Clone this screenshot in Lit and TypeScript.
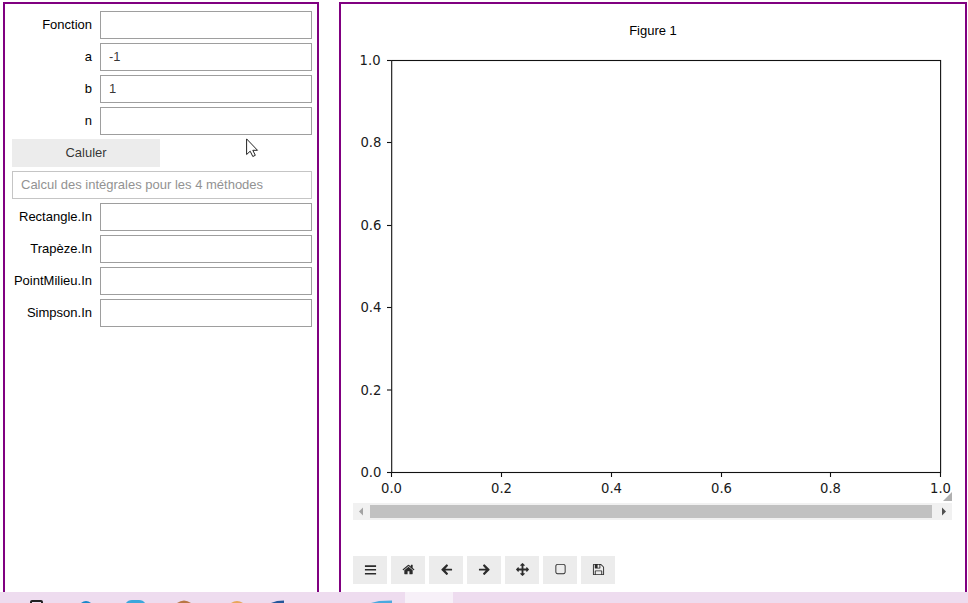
import { LitElement, html, css, svg } from "lit";
import { customElement, property } from "lit/decorators.js";

const ICONS: Record<string, string> = {
  bars: "M128 320h1536v225h-1536zM128 825h1536v225h-1536zM128 1375h1536v225h-1536z",
  home: "M1472 992v480q0 26-19 45t-45 19h-384v-384h-256v384h-384q-26 0-45-19t-19-45v-480q0-1 .5-3t.5-3l575-474 575 474q1 2 1 6zm223-69l-62 74q-8 9-21 11h-3q-13 0-21-7l-692-577-692 577q-12 8-24 7-13-2-21-11l-62-74q-8-10-7-23.5t11-21.5l719-599q32-26 76-26t76 26l244 204v-195q0-14 9-23t23-9h192q14 0 23 9t9 23v408l219 182q10 8 11 21.5t-7 23.5z",
  left: "M1664 860v130q0 60-60 60h-870l350 365q50 55 0 110l-100 100q-60 50-120 0l-660-665q-40-45 0-95l660-665q60-50 120 0l100 100q50 55 0 110l-350 370h870q60 0 60 80z",
  arrows: "M1792 896q0 26-19 45l-256 256q-19 19-45 19t-45-19-19-45v-128h-384v384h128q26 0 45 19t19 45-19 45l-256 256q-19 19-45 19t-45-19l-256-256q-19-19-19-45t19-45 45-19h128v-384h-384v128q0 26-19 45t-45 19-45-19l-256-256q-19-19-19-45t19-45l256-256q19-19 45-19t45 19 19 45v128h384v-384h-128q-26 0-45-19t-19-45 19-45l256-256q19-19 45-19t45 19l256 256q19 19 19 45t-19 45-45 19h-128v384h384v-128q0-26 19-45t45-19 45 19l256 256q19 19 19 45z",
  square: "M1312 256h-832q-66 0-113 47t-47 113v832q0 66 47 113t113 47h832q66 0 113-47t47-113v-832q0-66-47-113t-113-47zm288 160v832q0 119-84.5 203.5t-203.5 84.5h-832q-119 0-203.5-84.5t-84.5-203.5v-832q0-119 84.5-203.5t203.5-84.5h832q119 0 203.5 84.5t84.5 203.5z",
  save: "M512 1536h768v-384h-768v384zm896 0h128v-896q0-14-10-38.5t-20-34.5l-281-281q-10-10-34-20t-39-10v416q0 40-28 68t-68 28h-576q-40 0-68-28t-28-68v-416h-128v1280h128v-416q0-40 28-68t68-28h832q40 0 68 28t28 68v416zm-384-928v-320q0-13-9.5-22.5t-22.5-9.5h-192q-13 0-22.5 9.5t-9.5 22.5v320q0 13 9.5 22.5t22.5 9.5h192q13 0 22.5-9.5t9.5-22.5zm640 32v928q0 40-28 68t-68 28h-1344q-40 0-68-28t-28-68v-1344q0-40 28-68t68-28h928q40 0 88 20t76 48l280 280q28 28 48 76t20 88z",
};

@customElement("text-field")
class TextField extends LitElement {
  @property() label = "";
  @property() value = "";
  static styles = css`
    :host { display: flex; height: 28px; }
    .label { width: 80px; margin-right: 8px; text-align: right; line-height: 28px; white-space: nowrap; color: #000; }
    .box { flex: 1; box-sizing: border-box; border: 1px solid #9e9e9e; padding: 0 8px; line-height: 26px; color: rgba(0, 0, 0, 0.8); background: #fff; }
  `;
  render() {
    return html`<span class="label">${this.label}</span><div class="box">${this.value}</div>`;
  }
}

@customElement("tool-button")
class ToolButton extends LitElement {
  @property() icon = "bars";
  static styles = css`
    :host { display: flex; box-sizing: border-box; width: 34px; height: 28px; padding-bottom: 1px; background: #ececec; align-items: center; justify-content: center; }
    .icon { display: block; width: 13px; height: 13px; fill: #2b2b2b; }
    .flip { transform: scaleX(-1); }
  `;
  render() {
    const flip = this.icon === "right";
    return html`<svg class="icon ${flip ? "flip" : ""}" viewBox="0 0 1792 1792"><path d=${ICONS[flip ? "left" : this.icon]}></path></svg>`;
  }
}

@customElement("axes-plot")
class AxesPlot extends LitElement {
  static styles = css`
    :host { display: block; height: 457px; }
    .plot { display: block; overflow: visible; }
    .tick { font: 13.2px "DejaVu Sans", sans-serif; fill: #1a1a1a; }
    .line { stroke: #111; stroke-width: 1.1; fill: none; }
  `;
  render() {
    const xs = [38.5, 148.5, 258.5, 368.5, 477.5, 587.5];
    const ys = [428.5, 346, 263.5, 181.5, 98.5, 16.5];
    const names = ["0.0", "0.2", "0.4", "0.6", "0.8", "1.0"];
    return html`<svg class="plot" width="599" height="457" viewBox="0 0 599 457">
      <rect class="line" x="38.7" y="16.5" width="548.9" height="412"></rect>
      ${xs.map((x, i) => svg`<path class="line" d="M${x} 428.5v4.5"></path><text class="tick" text-anchor="middle" x=${x} y="449">${names[i]}</text>`)}
      ${ys.map((y, i) => svg`<path class="line" d="M34 ${y}h4.5"></path><text class="tick" text-anchor="end" x=${i === 5 ? 27.6 : 28.4} y=${Math.floor(y + 5.4)}>${names[i]}</text>`)}
      <path fill="#b0b0b0" d="M599 448v9h-9z"></path>
    </svg>`;
  }
}

@customElement("app-root")
class AppRoot extends LitElement {
  static styles = css`
    :host { display: flex; flex-direction: column; position: relative; width: 968px; height: 603px; overflow: hidden; background: #fff; font: 13px "Liberation Sans", Arial, sans-serif; }
    .columns { height: 590px; padding: 2px 1px 0 3px; display: flex; gap: 20px; }
    .panel { box-sizing: border-box; border: 2px solid #800080; border-bottom: 0; }
    .form { width: 316px; padding: 7px 5px 0 7px; display: flex; flex-direction: column; gap: 4px; }
    .calc { width: 148px; height: 28px; line-height: 28px; text-align: center; background: #ececec; color: rgba(0, 0, 0, 0.8); }
    .note { box-sizing: border-box; height: 28px; line-height: 26px; padding: 0 8px; border: 1px solid #c5c5c5; color: #929292; }
    .figure { width: 628px; padding: 12px 12px 0; }
    .title { height: 28px; line-height: 30px; text-align: center; color: #000; }
    .scroll { display: flex; align-items: center; width: 599px; height: 17px; margin-top: 2px; background: #f1f1f1; }
    .thumb { width: 562px; height: 13px; background: #c1c1c1; }
    .end { display: block; width: 17px; height: 17px; }
    .tools { display: flex; gap: 4px; margin-top: 36px; }
    .taskbar { height: 11px; background: #eedcef; }
    .art { display: block; }
    .cursor { position: absolute; left: 246px; top: 138px; }
  `;
  render() {
    return html`
      <div class="columns">
        <div class="panel form">
          <text-field label="Fonction"></text-field>
          <text-field label="a" value="-1"></text-field>
          <text-field label="b" value="1"></text-field>
          <text-field label="n"></text-field>
          <div class="calc">Caluler</div>
          <div class="note">Calcul des intégrales pour les 4 méthodes</div>
          <text-field label="Rectangle.In"></text-field>
          <text-field label="Trapèze.In"></text-field>
          <text-field label="PointMilieu.In"></text-field>
          <text-field label="Simpson.In"></text-field>
        </div>
        <div class="panel figure">
          <div class="title">Figure 1</div>
          <axes-plot></axes-plot>
          <div class="scroll">
            <svg class="end" viewBox="0 0 17 17"><path fill="#a3a3a3" d="M10 4.500v8l-4-4z"></path></svg>
            <div class="thumb"></div>
            <svg class="end" viewBox="0 0 17 17"><path fill="#505050" d="M10 4.500v8l4-4z"></path></svg>
          </div>
          <div class="tools">
            ${["bars", "home", "left", "right", "arrows", "square", "save"].map((n) => html`<tool-button icon=${n}></tool-button>`)}
          </div>
        </div>
      </div>
      <div class="taskbar">
        <svg class="art" width="968" height="11" viewBox="0 0 968 11">
          <path fill="#f7f0f8" d="M405 0h48v11h-48z"></path>
          <path fill="none" stroke="#222" stroke-width="2" d="M31 11v-1q0-1 1-1h9q1 0 1 1v1"></path>
          <path fill="#1787c9" d="M81 11q5-4 10 0z"></path>
          <path fill="#3ba7dc" d="M126 11q2-3 6-3h7q4 0 6 3z"></path>
          <path fill="#b87745" d="M177 11q7-5 14 0z"></path>
          <path fill="#e9a65a" d="M231 11q6-4 12 0z"></path>
          <path fill="#24579b" d="M271 11l6-2 7-.500V11z"></path>
          <path fill="#4ba9df" d="M371 11l8-2 13-.500V11z"></path>
        </svg>
      </div>
      <svg class="cursor" width="13" height="20" viewBox="0 0 13 20">
        <path fill="#fff" stroke="#222" stroke-width="1" d="M.6 .9v15.600l3.600-3.300 2.600 5.300 2.500-1.200-2.500-5h4.700z"></path>
      </svg>
    `;
  }
}
